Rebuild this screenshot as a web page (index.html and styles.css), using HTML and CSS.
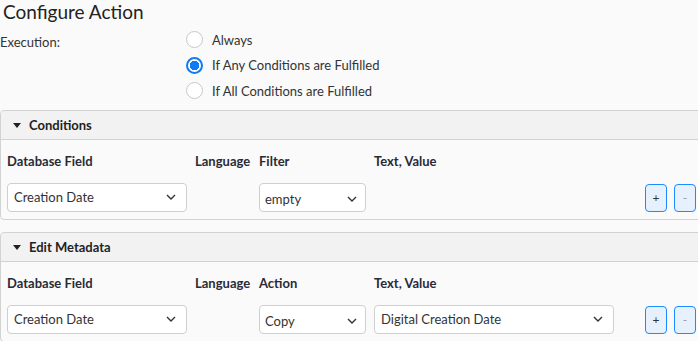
FILE: index.html
```html
<!DOCTYPE html>
<html lang="en">
<head>
    <meta charset="UTF-8">
    <meta name="viewport" content="width=device-width, initial-scale=1.0">
    <title>Configure Action</title>
    <link rel="stylesheet" href="styles.css">
</head>
<body>
    <h1 class="title">Configure Action</h1>

    <div class="execution">
        <span class="execution-label">Execution:</span>
        <div class="radio-group">
            <label class="radio"><span class="radio-dot"></span>Always</label>
            <label class="radio"><span class="radio-dot checked"></span>If Any Conditions are Fulfilled</label>
            <label class="radio"><span class="radio-dot"></span>If All Conditions are Fulfilled</label>
        </div>
    </div>

    <section class="panel">
        <div class="panel-header"><span class="caret"></span>Conditions</div>
        <div class="panel-body">
            <div class="field-grid">
                <div class="col-label">Database Field</div>
                <div class="col-label">Language</div>
                <div class="col-label">Filter</div>
                <div class="col-label">Text, Value</div>
                <div></div>

                <div class="select">Creation Date
                    <svg class="chevron" width="10" height="6" viewBox="0 0 10 6"><path d="M1 1l4 4 4-4" fill="none" stroke="#333" stroke-width="1.4"/></svg>
                </div>
                <div></div>
                <div class="select select-low">empty
                    <svg class="chevron" width="10" height="6" viewBox="0 0 10 6"><path d="M1 1l4 4 4-4" fill="none" stroke="#333" stroke-width="1.4"/></svg>
                </div>
                <div></div>
                <div class="row-buttons">
                    <button class="btn-small">+</button>
                    <button class="btn-small btn-muted">-</button>
                </div>
            </div>
        </div>
    </section>

    <section class="panel panel-next">
        <div class="panel-header"><span class="caret"></span>Edit Metadata</div>
        <div class="panel-body">
            <div class="field-grid">
                <div class="col-label">Database Field</div>
                <div class="col-label">Language</div>
                <div class="col-label">Action</div>
                <div class="col-label">Text, Value</div>
                <div></div>

                <div class="select">Creation Date
                    <svg class="chevron" width="10" height="6" viewBox="0 0 10 6"><path d="M1 1l4 4 4-4" fill="none" stroke="#333" stroke-width="1.4"/></svg>
                </div>
                <div></div>
                <div class="select select-low">Copy
                    <svg class="chevron" width="10" height="6" viewBox="0 0 10 6"><path d="M1 1l4 4 4-4" fill="none" stroke="#333" stroke-width="1.4"/></svg>
                </div>
                <div class="select">Digital Creation Date
                    <svg class="chevron" width="10" height="6" viewBox="0 0 10 6"><path d="M1 1l4 4 4-4" fill="none" stroke="#333" stroke-width="1.4"/></svg>
                </div>
                <div class="row-buttons">
                    <button class="btn-small">+</button>
                    <button class="btn-small btn-muted">-</button>
                </div>
            </div>
        </div>
    </section>
</body>
</html>
```

FILE: styles.css
```css
html {
    overflow: hidden;
}
body {
    margin: 0;
    font-family: Lato, "Open Sans", sans-serif;
    font-size: 13px;
    color: #333;
    background-color: #fafafa;
}
.title {
    margin: 0 0 3px 3px;
    font-size: 19px;
    font-weight: normal;
    line-height: 24px;
    color: #222;
}
.execution {
    display: flex;
}
.execution-label {
    width: 186px;
    padding-top: 7px;
    line-height: 17px;
}
.radio-group {
    display: flex;
    flex-direction: column;
}
.radio {
    display: flex;
    align-items: center;
    height: 25.5px;
    color: #333;
}
.radio-dot {
    box-sizing: border-box;
    width: 17px;
    height: 17px;
    margin-right: 9px;
    border: 1px solid #c8c8c8;
    border-radius: 50%;
    background-color: #fff;
}
.radio-dot.checked {
    border: 2px solid #0d7cf2;
    background: radial-gradient(circle, #0d7cf2 0 4.5px, #fff 5px);
}
.panel {
    width: 702px;
    margin-top: 6.5px;
    border: 1px solid #d2d2d2;
    border-radius: 4px;
    background-color: #fafafa;
}
.panel-next {
    margin-top: 12px;
}
.panel-header {
    display: flex;
    align-items: center;
    height: 28px;
    padding-left: 12px;
    border-bottom: 1px solid #d2d2d2;
    border-radius: 4px 4px 0 0;
    background-color: #f2f2f2;
    font-weight: bold;
    color: #222;
}
.caret {
    width: 0;
    height: 0;
    margin-right: 8px;
    border-left: 4.5px solid transparent;
    border-right: 4.5px solid transparent;
    border-top: 5px solid #222;
}
.panel-body {
    padding: 12px 7px 7px 6px;
}
.field-grid {
    display: grid;
    grid-template-columns: 180px 56px 107px 240px 1fr;
    column-gap: 8px;
    row-gap: 13px;
    align-items: center;
}
.col-label {
    font-weight: bold;
    line-height: 18px;
    color: #2a2a35;
    white-space: nowrap;
}
.select {
    box-sizing: border-box;
    display: flex;
    align-items: center;
    justify-content: space-between;
    height: 29px;
    padding: 0 10px 1px 6px;
    border: 1px solid #cfcfcf;
    border-radius: 4px;
    background-color: #fff;
    color: #333;
}
.select-low {
    padding: 2px 8px 0 5px;
}
.chevron {
    flex-shrink: 0;
}
.row-buttons {
    display: flex;
    justify-content: flex-end;
    gap: 7px;
}
.btn-small {
    box-sizing: border-box;
    width: 22px;
    height: 28px;
    padding: 0;
    border: 1.5px solid #1a8cff;
    border-radius: 4px;
    background-color: #e6f1fd;
    font-family: inherit;
    font-size: 12px;
    color: #333;
}
.btn-muted {
    color: #999;
}
```
